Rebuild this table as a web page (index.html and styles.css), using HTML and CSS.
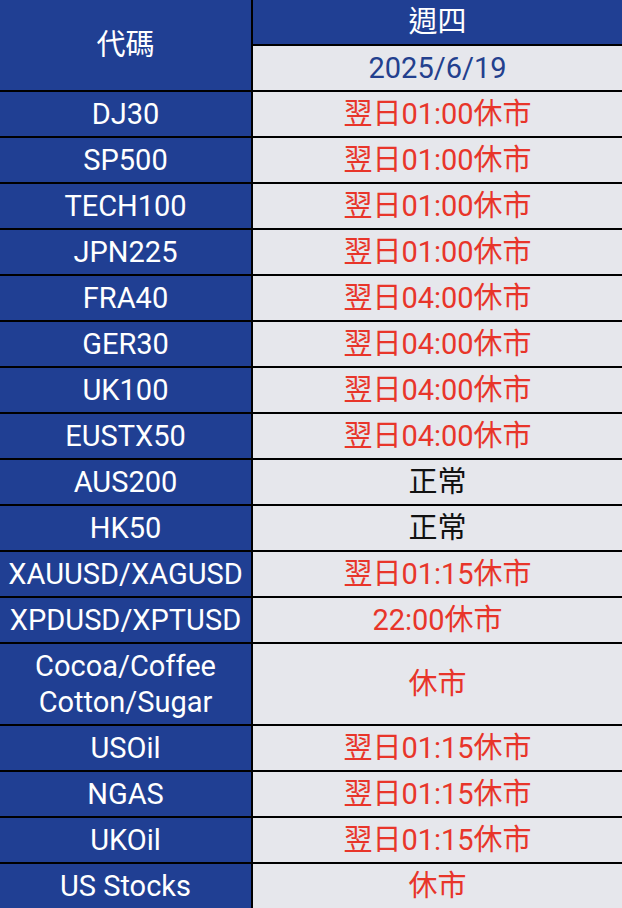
FILE: index.html
```html
<!DOCTYPE html>
<html lang="zh-Hant">
<head>
<meta charset="utf-8">
<link rel="stylesheet" href="styles.css">
</head>
<body>
<div class="grid">
  <div class="cell head code">代碼</div>
  <div class="cell head">週四</div>
  <div class="cell date">2025/6/19</div>

  <div class="cell sym">DJ30</div><div class="cell val red">翌日01:00休市</div>
  <div class="cell sym">SP500</div><div class="cell val red">翌日01:00休市</div>
  <div class="cell sym">TECH100</div><div class="cell val red">翌日01:00休市</div>
  <div class="cell sym">JPN225</div><div class="cell val red">翌日01:00休市</div>
  <div class="cell sym">FRA40</div><div class="cell val red">翌日04:00休市</div>
  <div class="cell sym">GER30</div><div class="cell val red">翌日04:00休市</div>
  <div class="cell sym">UK100</div><div class="cell val red">翌日04:00休市</div>
  <div class="cell sym">EUSTX50</div><div class="cell val red">翌日04:00休市</div>
  <div class="cell sym">AUS200</div><div class="cell val">正常</div>
  <div class="cell sym">HK50</div><div class="cell val">正常</div>
  <div class="cell sym">XAUUSD/XAGUSD</div><div class="cell val red">翌日01:15休市</div>
  <div class="cell sym">XPDUSD/XPTUSD</div><div class="cell val red">22:00休市</div>
  <div class="cell sym">Cocoa/Coffee<br>Cotton/Sugar</div><div class="cell val red">休市</div>
  <div class="cell sym">USOil</div><div class="cell val red">翌日01:15休市</div>
  <div class="cell sym">NGAS</div><div class="cell val red">翌日01:15休市</div>
  <div class="cell sym">UKOil</div><div class="cell val red">翌日01:15休市</div>
  <div class="cell sym">US Stocks</div><div class="cell val red">休市</div>
</div>
</body>
</html>
```
FILE: styles.css
```css
html, body {
  margin: 0;
  padding: 0;
  background: #e6e7ec;
}
body {
  width: 622px;
  height: 908px;
  overflow: hidden;
  font-family: Roboto, "Noto Sans CJK TC", sans-serif;
  font-size: 29px;
}
.grid {
  display: grid;
  grid-template-columns: 251px 1fr;
  grid-auto-rows: minmax(44px, auto);
  gap: 2px;
  background: #000;
}
.cell {
  display: flex;
  align-items: center;
  justify-content: center;
  text-align: center;
  padding: 4px 0;
  line-height: 36px;
  box-sizing: border-box;
}
.head, .sym {
  background: #203f93;
  color: #fff;
}
.code {
  grid-row: span 2;
}
.date {
  background: #e6e7ec;
  color: #23408e;
}
.val {
  background: #e6e7ec;
  color: #111;
}
.val.red {
  color: #e8352a;
}
```
